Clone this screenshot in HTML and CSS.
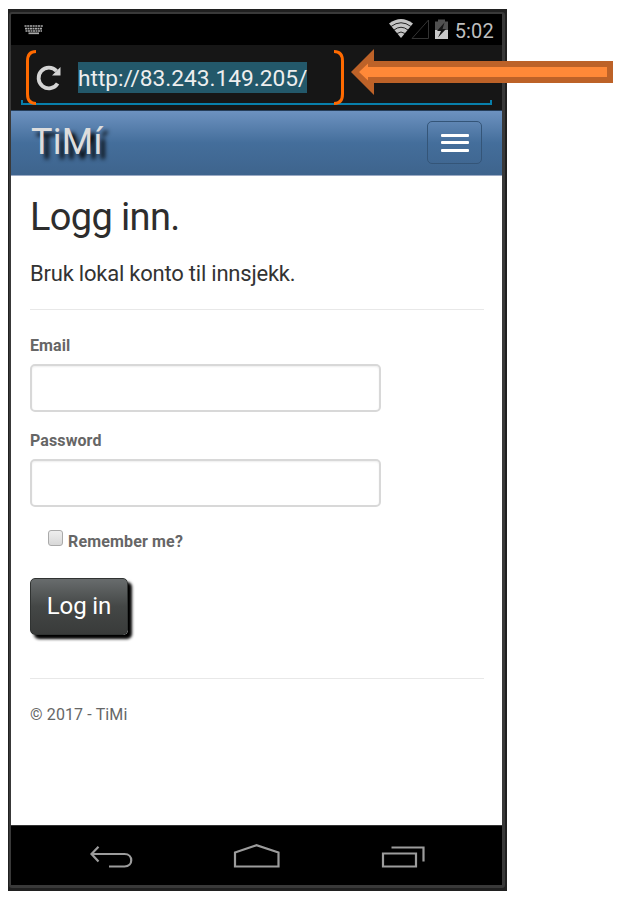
FILE: index.html
```html
<!DOCTYPE html>
<html lang="no">
<head>
<meta charset="utf-8">
<title>Logg inn - TiMi</title>
<link rel="stylesheet" href="styles.css">
</head>
<body>
<div class="phone">
  <div class="screen">
    <div class="status">
      <svg class="keyboard" width="20" height="12" viewBox="0 0 20 12"><g stroke="#aaa" stroke-width="1.700" fill="none"><path d="M.5 2H19" stroke-dasharray="2.100 .6"/><path d="M1 4.600H18.500M1.500 7H18" stroke-dasharray="2 .5"/><path d="M4.500 9.300H15"/></g></svg>
      <div class="indicators">
        <svg width="66" height="22" viewBox="0 0 66 22">
          <path d="M1 5.500Q13 -3.500 25 5.500L13 20Z" fill="#c4c4c4"/>
          <path d="M3 8.500Q13 1 23 8.500M6 12Q13 6.500 20 12M9 15.500Q13 12.500 17 15.500" fill="none" stroke="#222" stroke-width="1"/>
          <path d="M24 20.500H40.500V2Z" fill="none" stroke="#333"/>
          <path d="M47 3.500H50V1.500H57V3.500H60V12H47Z" fill="#505050"/><path d="M47 12H60V21H47Z" fill="#c8c8c8"/>
          <path d="M56.500 4.500L49 13H53L50 19.500L58 11H54.500Z" fill="#151515"/>
        </svg>
        <span class="time">5:02</span>
      </div>
    </div>
    <div class="address">
      <svg class="reload" width="28" height="28" viewBox="0 0 28 28"><path d="M21.500 7A10.300 10.300 0 1 0 22.600 19.500" fill="none" stroke="#d4d4d4" stroke-width="3.800"/><path d="M25.500 3V11.500H17Z" fill="#d4d4d4"/></svg>
      <span class="url">http://83.243.149.205/</span>
      <div class="underline"></div>
    </div>
    <header class="navbar">
      <span class="brand">TiMí</span>
      <button class="toggle" aria-label="Menu"><i></i><i></i><i></i></button>
    </header>
    <main class="page">
      <h1>Logg inn.</h1>
      <p class="lead">Bruk lokal konto til innsjekk.</p>
      <hr>
      <form>
        <label class="label" for="email">Email</label>
        <input class="field" id="email" type="text">
        <label class="label" for="password">Password</label>
        <input class="field" id="password" type="password">
        <label class="remember"><span class="box"></span><span>Remember me?</span></label>
        <button class="login" type="button">Log in</button>
      </form>
      <hr>
      <footer>© 2017 - TiMi</footer>
    </main>
    <nav class="keys">
      <svg width="491" height="59" viewBox="0 0 491 59" fill="none" stroke="#9c9c9c" stroke-width="2.200">
        <path d="M87.500 20.800L80.500 28L87.500 35.500M80.500 28H113.500C122.500 28 122.500 40.500 113.500 40.500H98"/>
        <path d="M224 40.500V26.500L245.500 19.200L267.500 26.500V40.500Z"/>
        <path d="M372 27.500H405V40.500H372ZM380.500 21.500H412.500V35.500"/>
      </svg>
    </nav>
  </div>
</div>
<svg class="notes" width="620" height="130" viewBox="0 0 620 130">
  <path d="M36 51.500Q27.500 51.500 27.500 61V94Q27.500 103.500 36 103.500M334 51.500Q342.500 51.500 342.500 61V94Q342.500 103.500 334 103.500" fill="none" stroke="#ff6a00" stroke-width="3"/>
  <path d="M351 72L374 49V61H613V83H374V95Z" fill="#bd6228"/>
  <path d="M359 72L368 63.500V67H607V77H368V80.500Z" fill="#ff8938"/>
</svg>
</body>
</html>
```
FILE: styles.css
```css
* { box-sizing: border-box; }
body { margin: 0; width: 620px; height: 898px; overflow: hidden; background: #fff; font-family: Roboto, sans-serif; color: #333; }
.phone { width: 499px; height: 882px; margin: 9px 0 0 8px; padding: 3px 2px 3px 1px; background: #202020; }
.screen { width: 496px; height: 876px; border: 2px solid #393939; border-right-width: 3px; border-bottom-width: 3px; background: #000; border-radius: 3px; }
.status { height: 31px; padding: 4px 8px 0 13px; display: flex; justify-content: space-between; }
.keyboard { margin-top: 6px; }
.indicators { display: flex; gap: 1px; }
.time { font-size: 20px; letter-spacing: .2px; line-height: 26px; color: #bebebe; }
.address { height: 65px; background: #161616; position: relative; display: flex; align-items: flex-start; padding: 17px 0 0 24px; }
.reload { flex: none; margin: 2px 0 0; }
.url { margin-left: 15px; height: 31px; line-height: 33px; background: #23586a; color: #eee; font-size: 22.700px; white-space: nowrap; }
.underline { position: absolute; left: 10px; right: 10px; bottom: 5px; height: 5px; border: solid #087fab; border-width: 0 2px 2px; }
.navbar { height: 66px; border-top: 1px solid #263e5a; border-bottom: 1px solid #9baac4; background: linear-gradient(#6d92c0, #446e9b 50%, #3e648d); display: flex; justify-content: space-between; padding: 10px 20px 0 20px; }
.brand { font-size: 36px; letter-spacing: .3px; line-height: 42px; color: #ddd; text-shadow: 5px 5px 4px #000; }
.toggle { width: 55px; height: 43px; border: 1px solid #345578; border-radius: 5px; background: transparent; padding: 0; display: flex; flex-direction: column; align-items: center; justify-content: center; gap: 4.500px; }
.toggle i { width: 28px; height: 3px; border-radius: 1px; background: #fff; }
.page { height: 649px; padding: 19px 18px 0 19px; background: #fff; overflow: hidden; }
h1 { margin: 0; font-size: 38px; letter-spacing: -.65px; line-height: 44px; font-weight: 400; color: #2d2d2d; }
.lead { margin: 22px 0 22px; font-size: 22px; letter-spacing: -.22px; line-height: 26px; }
hr { height: 1px; border: 0; margin: 0; background: #e8e8e8; }
.label { display: block; margin-top: 25px; height: 20px; font-size: 16px; letter-spacing: .1px; line-height: 21px; font-weight: 700; color: #666; }
.field { display: block; width: 351px; height: 48px; margin-top: 9px; border: 2px solid #d8d8d8; border-radius: 5px; background: #fff; box-shadow: inset 0 1px 2px #eee; outline: 0; }
.field + .label { margin-top: 18px; }
.remember { display: flex; gap: 5px; margin: 23px 0 0 18px; height: 22px; font-size: 16px; letter-spacing: .15px; line-height: 23px; font-weight: 700; color: #666; }
.box { width: 15px; height: 16px; border: 1px solid #aaa; border-radius: 3px; background: linear-gradient(#eee, #d8d8d8); }
.login { display: block; width: 98px; height: 57px; margin: 26px 0 43px; padding: 0; border: 1px solid #303332; border-radius: 5px; background: linear-gradient(#686c6d, #444746 50%, #393b3a); box-shadow: 4px 4px 3px #000; color: #fff; font: 24px/55px Roboto, sans-serif; letter-spacing: -.1px; }
footer { margin-top: 25px; font-size: 16px; letter-spacing: .12px; line-height: 22px; color: #666; }
.keys { height: 60px; border-top: 1px solid #333; }
.notes { position: absolute; left: 0; top: 0; pointer-events: none; }
```
